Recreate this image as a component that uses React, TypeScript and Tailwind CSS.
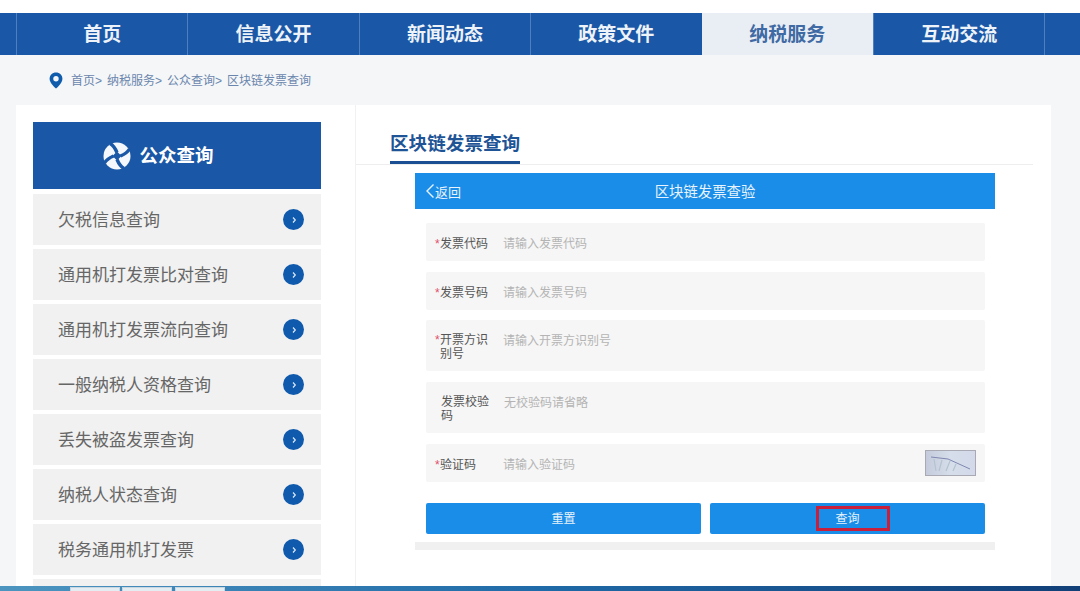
const font = "font-['Liberation_Sans','Noto_Sans_CJK_SC',sans-serif]"

const navItems = ["首页", "信息公开", "新闻动态", "政策文件", "纳税服务", "互动交流"]
const sideItems = [
  "欠税信息查询",
  "通用机打发票比对查询",
  "通用机打发票流向查询",
  "一般纳税人资格查询",
  "丢失被盗发票查询",
  "纳税人状态查询",
  "税务通用机打发票",
]
const crumbs = ["首页>", "纳税服务>", "公众查询>", "区块链发票查询"]

const Navbar = () => {
  return (
    <nav className="mt-[13px] flex h-[42px] shrink-0 bg-[#1a57a6] pl-4">
      {navItems.map((item) => {
        const active = item === "纳税服务"
        return (
          <div
            key={item}
            className={
              active
                ? "flex w-[171.4px] items-center justify-center bg-[#e9eef5] pt-[2px] text-[19px] font-bold text-[#3f6aa3]"
                : "flex w-[171.4px] items-center justify-center border-l border-[#4f7fbd] pt-[2px] text-[19px] font-bold text-[#eef3f9]"
            }
          >
            {item}
          </div>
        )
      })}
      <div className="flex-1 border-l border-[#4f7fbd]" />
    </nav>
  )
}

const Breadcrumb = () => {
  return (
    <div className="flex h-[50px] shrink-0 items-center pl-[49px] pt-[1px] text-[12px] text-[#6a86ad]">
      <svg width="14" height="17" viewBox="0 0 14 17" className="mr-[8px]">
        <path
          d="M7 0.5C3.3 0.5 0.6 3.2 0.6 6.7C0.6 10.6 4.6 14.3 7 16.5C9.4 14.3 13.4 10.6 13.4 6.7C13.4 3.2 10.7 0.5 7 0.5Z"
          fill="#0f5cad"
        />
        <circle cx="7" cy="6.8" r="2.7" fill="#f5f6f8" />
      </svg>
      <div className="flex gap-[5px]">
        {crumbs.map((crumb) => (
          <span key={crumb}>{crumb}</span>
        ))}
      </div>
    </div>
  )
}

const Sidebar = () => {
  return (
    <aside className="w-[340px] shrink-0 border-r border-[#f0f1f3] pl-[17px] pr-[34px] pt-[17px]">
      <div className="flex h-[67px] items-center justify-center gap-[8px] bg-[#1a57a6] pr-[37px] text-[18.5px] font-bold text-white">
        <svg width="28" height="28" viewBox="0 0 28 28">
          <circle cx="14" cy="14" r="13.5" fill="#f4f7fb" />
          <path d="M14 9.5L18.5 14L14 18.5L9.5 14Z" fill="#1a57a6" />
          <path d="M14 10.5C12.5 7 10.5 3.5 7 1.5" fill="none" stroke="#1a57a6" strokeWidth="3.4" />
          <path d="M17.5 14C21 12.5 24.5 10.5 26.5 7" fill="none" stroke="#1a57a6" strokeWidth="3.4" />
          <path d="M14 17.5C15.5 21 17.5 24.5 21 26.5" fill="none" stroke="#1a57a6" strokeWidth="3.4" />
          <path d="M10.5 14C7 15.5 3.5 17.5 1.5 21" fill="none" stroke="#1a57a6" strokeWidth="3.4" />
        </svg>
        <span>公众查询</span>
      </div>
      <ul className="mt-[5px] flex flex-col gap-[4px]">
        {sideItems.map((item) => (
          <li key={item} className="flex h-[51px] items-center justify-between bg-[#f1f1f1] pl-[25px] pr-[17px] text-[17px] text-[#666]">
            <span className="pt-[2px]">{item}</span>
            <span className="flex h-[21px] w-[21px] items-center justify-center rounded-full bg-[#0f5aad]">
              <svg width="8" height="8" viewBox="0 0 8 8">
                <path d="M3 1.5L5.3 4L3 6.5" fill="none" stroke="#dbe7f5" strokeWidth="1.2" />
              </svg>
            </span>
          </li>
        ))}
        <li className="h-[51px] bg-[#f1f1f1]" />
      </ul>
    </aside>
  )
}

const FormRow = ({
  label,
  placeholder,
  required = true,
  tall = false,
  children,
}: {
  label: string
  placeholder: string
  required?: boolean
  tall?: boolean
  children?: React.ReactNode
}) => {
  return (
    <div className={tall ? "flex h-[51px] rounded-[2px] bg-[#f6f6f6] pl-[9px] pr-[9px] pt-[12px] text-[12px]" : "flex h-[38px] items-center rounded-[2px] bg-[#f6f6f6] pl-[9px] pr-[9px] text-[12px]"}>
      <div className={tall ? "pt-[1px]" : "pt-[4px]"}>
        <div className={required ? "relative w-[68px] shrink-0 pl-[5px] pr-[15px] leading-[14px] text-[#555]" : "w-[69px] shrink-0 pl-[6px] pr-[14px] leading-[14px] text-[#555]"}>
          {required && <span className="absolute left-0 top-0 text-[#e0506a]">*</span>}
          {label}
        </div>
      </div>
      <div className={tall ? "flex-1 pt-[3px] leading-[13px] text-[#b4b4b4]" : "flex-1 pt-[4px] leading-[13px] text-[#b4b4b4]"}>{placeholder}</div>
      {children}
    </div>
  )
}

const Captcha = () => {
  return (
    <div className="h-[26px] w-[51px] border border-[#a9a9b3] bg-gradient-to-r from-[#c5cbdc] via-[#d5deea] to-[#d3d9ea]">
      <svg width="49" height="24" viewBox="0 0 49 24">
        <path d="M5 6L22 8L44 18" fill="none" stroke="#7f88b0" strokeWidth="1" />
        <path d="M8 8L10 20M16 9L13 20M24 10L20 20M30 13L27 20" fill="none" stroke="#b4c3cf" strokeWidth="1.2" />
      </svg>
    </div>
  )
}

const QueryPanel = () => {
  return (
    <section className="flex-1 pr-[18px] pt-[25px]">
      <div className="border-b border-[#eeeeee] pl-[34px]">
        <h2 className="inline-block h-[34px] border-b-[3px] border-[#1a4f94] text-[18.6px] font-bold leading-[27px] text-[#1f5596]">区块链发票查询</h2>
      </div>
      <div className="ml-[59px] mr-[38px] mt-[8px]">
        <div className="relative flex h-[36px] items-center justify-center bg-[#1a8de8] pt-[3px] text-[14.4px] text-[#e8f3fd]">
          <div className="absolute left-[10px] top-0 flex h-full items-center pt-[3px] text-[13px]">
            <svg width="10" height="16" viewBox="0 0 10 16" className="-mt-[3px]">
              <path d="M8.5 1.5L2 8L8.5 14.5" fill="none" stroke="#e8f3fd" strokeWidth="1.4" />
            </svg>
            <span>返回</span>
          </div>
          区块链发票查验
        </div>
        <div className="ml-[11px] mr-[10px] mt-[14px] flex flex-col gap-[11px]">
          <FormRow label="发票代码" placeholder="请输入发票代码" />
          <div className="-mb-[1px]">
            <FormRow label="发票号码" placeholder="请输入发票号码" />
          </div>
          <FormRow label="开票方识别号" placeholder="请输入开票方识别号" tall />
          <FormRow label="发票校验码" placeholder="无校验码请省略" required={false} tall />
          <FormRow label="验证码" placeholder="请输入验证码">
            <Captcha />
          </FormRow>
        </div>
        <div className="ml-[11px] mr-[10px] mt-[21px] flex gap-[9px] text-[12px] text-[#e8f3fd]">
          <button className="flex h-[31px] flex-1 items-center justify-center rounded-[2px] bg-[#1a8de8]">重置</button>
          <button className="relative flex h-[31px] flex-1 items-center justify-center rounded-[2px] bg-[#1a8de8]">
            查询
            <span className="absolute left-[106px] top-[3px] h-[25px] w-[74px] border-[3px] border-[#c81f3c]" />
          </button>
        </div>
        <div className="mt-[8px] h-[8px] bg-[#f0f0f0]" />
      </div>
    </section>
  )
}

const Taskbar = () => {
  return (
    <footer className="flex h-[5px] shrink-0 items-end bg-gradient-to-r from-[#4c95c0] via-[#1f6aa8] to-[#123f78] pl-[70px]">
      <div className="h-[4px] w-[50px] border-x border-t border-[#c9d6e0] bg-[#e4edf2]" />
      <div className="ml-[2px] h-[4px] w-[50px] border-x border-t border-[#c9d6e0] bg-[#e4edf2]" />
      <div className="ml-[3px] h-[4px] w-[50px] border-x border-t border-[#c9d6e0] bg-[#e4edf2]" />
    </footer>
  )
}

export default function App() {
  return (
    <div className={`${font} flex h-[591px] w-[1080px] flex-col overflow-hidden bg-white`}>
      <Navbar />
      <div className="flex min-h-0 flex-1 flex-col bg-[#f5f6f8]">
        <Breadcrumb />
        <main className="ml-4 mr-[29px] flex min-h-0 flex-1 overflow-hidden bg-white">
          <Sidebar />
          <QueryPanel />
        </main>
      </div>
      <Taskbar />
    </div>
  )
}
